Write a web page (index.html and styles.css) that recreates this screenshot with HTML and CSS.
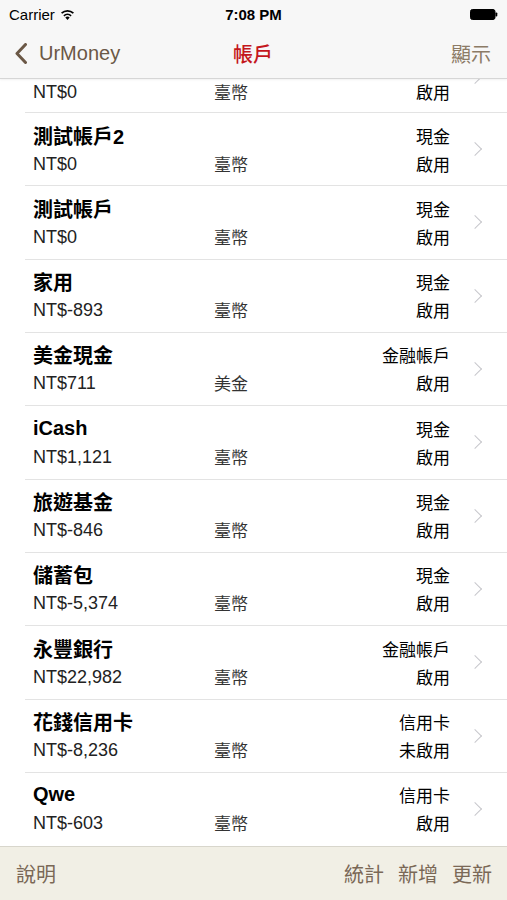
FILE: index.html
```html
<!DOCTYPE html>
<html lang="zh-Hant">
<head>
    <meta charset="UTF-8">
    <meta name="viewport" content="width=device-width, initial-scale=1.0">
    <title>帳戶</title>
    <link rel="stylesheet" href="styles.css">
</head>
<body>
    <header class="top">
        <div class="status">
            <div class="carrier">Carrier
                <svg class="wifi" width="15" height="11" viewBox="0 0 15 11">
                    <path d="M7.5 11 L5.3 8.4 A3.4 3.4 0 0 1 9.7 8.4 Z" fill="#000"/>
                    <path d="M3.9 6.8 A5.4 5.4 0 0 1 11.1 6.8" stroke="#000" stroke-width="1.7" fill="none"/>
                    <path d="M1.6 4.2 A8.6 8.6 0 0 1 13.4 4.2" stroke="#000" stroke-width="1.7" fill="none"/>
                </svg>
            </div>
            <div class="clock">7:08 PM</div>
            <div class="battery">
                <svg width="28" height="11" viewBox="0 0 28 11">
                    <rect x="0.5" y="0.5" width="24.5" height="10" rx="2" fill="#000" stroke="#000"/>
                    <rect x="25.5" y="3.5" width="1.8" height="4" rx="0.8" fill="#000"/>
                </svg>
            </div>
        </div>
        <nav class="navbar">
            <a class="back" href="#">
                <svg width="12" height="21" viewBox="0 0 12 21">
                    <path d="M10.5 1.5 L2 10.5 L10.5 19.5" stroke="#6b5846" stroke-width="3" fill="none" stroke-linecap="round" stroke-linejoin="round"/>
                </svg>
                <span>UrMoney</span>
            </a>
            <div class="title">帳戶</div>
            <a class="show" href="#">顯示</a>
        </nav>
    </header>

    <main class="list">
        <!-- first row is scrolled under the nav bar, only its bottom line shows -->
        <div class="row partial">
            <div class="amount">NT$0</div>
            <div class="cur">臺幣</div>
            <div class="state">啟用</div>
            <div class="chev"></div>
        </div>
        <div class="row">
            <div class="name">測試帳戶2</div>
            <div class="kind">現金</div>
            <div class="amount">NT$0</div>
            <div class="cur">臺幣</div>
            <div class="state">啟用</div>
            <div class="chev"></div>
        </div>
        <div class="row">
            <div class="name">測試帳戶</div>
            <div class="kind">現金</div>
            <div class="amount">NT$0</div>
            <div class="cur">臺幣</div>
            <div class="state">啟用</div>
            <div class="chev"></div>
        </div>
        <div class="row">
            <div class="name">家用</div>
            <div class="kind">現金</div>
            <div class="amount">NT$-893</div>
            <div class="cur">臺幣</div>
            <div class="state">啟用</div>
            <div class="chev"></div>
        </div>
        <div class="row">
            <div class="name">美金現金</div>
            <div class="kind">金融帳戶</div>
            <div class="amount">NT$711</div>
            <div class="cur">美金</div>
            <div class="state">啟用</div>
            <div class="chev"></div>
        </div>
        <div class="row">
            <div class="name">iCash</div>
            <div class="kind">現金</div>
            <div class="amount">NT$1,121</div>
            <div class="cur">臺幣</div>
            <div class="state">啟用</div>
            <div class="chev"></div>
        </div>
        <div class="row">
            <div class="name">旅遊基金</div>
            <div class="kind">現金</div>
            <div class="amount">NT$-846</div>
            <div class="cur">臺幣</div>
            <div class="state">啟用</div>
            <div class="chev"></div>
        </div>
        <div class="row">
            <div class="name">儲蓄包</div>
            <div class="kind">現金</div>
            <div class="amount">NT$-5,374</div>
            <div class="cur">臺幣</div>
            <div class="state">啟用</div>
            <div class="chev"></div>
        </div>
        <div class="row">
            <div class="name">永豐銀行</div>
            <div class="kind">金融帳戶</div>
            <div class="amount">NT$22,982</div>
            <div class="cur">臺幣</div>
            <div class="state">啟用</div>
            <div class="chev"></div>
        </div>
        <div class="row">
            <div class="name">花錢信用卡</div>
            <div class="kind">信用卡</div>
            <div class="amount">NT$-8,236</div>
            <div class="cur">臺幣</div>
            <div class="state">未啟用</div>
            <div class="chev"></div>
        </div>
        <div class="row">
            <div class="name">Qwe</div>
            <div class="kind">信用卡</div>
            <div class="amount">NT$-603</div>
            <div class="cur">臺幣</div>
            <div class="state">啟用</div>
            <div class="chev"></div>
        </div>
    </main>

    <footer class="toolbar">
        <a href="#">說明</a>
        <div class="tools">
            <a href="#">統計</a>
            <a href="#">新增</a>
            <a href="#">更新</a>
        </div>
    </footer>
</body>
</html>
```

FILE: styles.css
```css
body {
    font-family: "Liberation Sans", "Noto Sans CJK TC", sans-serif;
    margin: 0;
    padding: 0;
    width: 507px;
    height: 900px;
    overflow: hidden;
    background-color: white;
    color: #000;
}
a {
    text-decoration: none;
}
.top {
    background-color: #f7f7f7;
    border-bottom: 1px solid #d6d6d6;
    box-shadow: 0 1px 2px rgba(0, 0, 0, 0.06);
    height: 78px;
    position: relative;
    z-index: 2;
}
.status {
    display: grid;
    grid-template-columns: 1fr auto 1fr;
    align-items: center;
    height: 28px;
    padding: 0 9px;
    font-size: 15px;
}
.carrier {
    display: flex;
    align-items: center;
    gap: 5px;
}
.clock {
    font-weight: bold;
    font-size: 15px;
}
.battery {
    justify-self: end;
    display: flex;
}
.navbar {
    display: grid;
    grid-template-columns: 1fr auto 1fr;
    align-items: center;
    height: 50px;
    padding: 0 16px 0 15px;
    font-size: 20px;
}
.back {
    display: flex;
    align-items: center;
    gap: 12px;
    color: #6b5846;
}
.title {
    color: #c4161c;
    font-weight: 500;
}
.show {
    justify-self: end;
    color: #8c7b66;
}
.list {
    height: 767px;
    overflow: hidden;
}
.row {
    height: 73.33px;
    box-sizing: border-box;
    margin-left: 25px;
    padding: 10px 0 0 8px;
    border-top: 1px solid #e3e3e3;
    display: grid;
    grid-template-columns: 181px 1fr auto 57px;
    grid-template-rows: 24px 24px;
    row-gap: 4px;
    align-items: center;
}
.row.partial {
    height: 33px;
    padding-top: 0;
    border-top: none;
    grid-template-rows: 24px;
}
.row.partial .chev {
    grid-row: 1;
    margin-top: -28px;
}
.name {
    grid-column: 1 / 3;
    font-size: 20px;
    font-weight: bold;
}
.kind, .state {
    grid-column: 3;
    justify-self: end;
    font-size: 17px;
}
.kind {
    grid-row: 1;
}
.amount {
    font-size: 18px;
    color: #222;
    margin-top: 2px;
}
.cur {
    font-size: 17px;
    color: #333;
}
.chev {
    grid-column: 4;
    grid-row: 1 / 3;
    justify-self: start;
    margin-left: 20px;
    width: 9px;
    height: 9px;
    border-top: 1.5px solid #c7c7cc;
    border-right: 1.5px solid #c7c7cc;
    transform: rotate(45deg);
}
.toolbar {
    height: 54px;
    box-sizing: border-box;
    border-top: 1px solid #d8d6cc;
    background-color: #f1efe5;
    display: flex;
    justify-content: space-between;
    align-items: center;
    padding: 0 15px 0 16px;
    font-size: 20px;
}
.toolbar a {
    color: #7a6856;
}
.tools {
    display: flex;
    gap: 14px;
}
```
